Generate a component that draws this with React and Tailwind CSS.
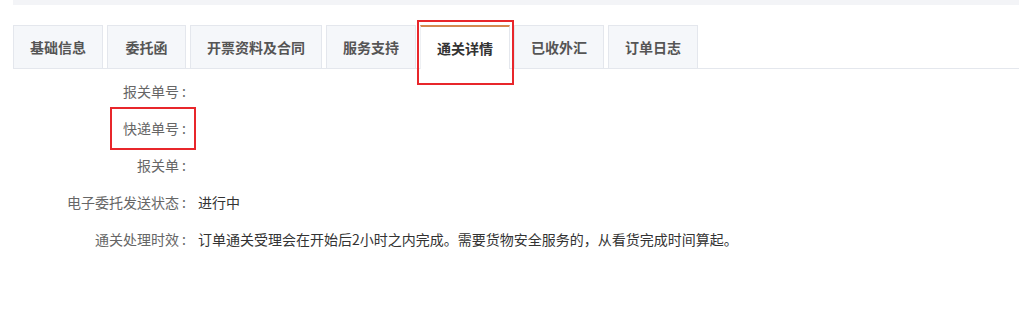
const tabs = ["基础信息", "委托函", "开票资料及合同", "服务支持", "通关详情", "已收外汇", "订单日志"];
const activeTab = "通关详情";

const rows = [
  { label: "报关单号", value: "" },
  { label: "快递单号", value: "", marked: true },
  { label: "报关单", value: "" },
  { label: "电子委托发送状态", value: "进行中" },
  {
    label: "通关处理时效",
    value: "订单通关受理会在开始后2小时之内完成。需要货物安全服务的，从看货完成时间算起。",
  },
];

export default function App() {
  return (
    <div
      className="bg-white w-[1019px] h-[332px] overflow-hidden pl-[13px]"
      style={{ fontFamily: '"Microsoft YaHei", "Noto Sans CJK SC", "Noto Sans", sans-serif' }}
    >
      {/* top grey strip */}
      <div className="h-[5px] bg-[#f3f4f7]" />

      {/* Tabs */}
      <div className="mt-[20px] flex items-end gap-[4px] border-b border-[#e4e7ed] h-[44px]">
        {tabs.map((tab) => {
          const active = tab === activeTab;
          return (
            <div key={tab} className="relative h-full">
              <div
                className={
                  active
                    ? "h-[44px] -mb-px min-w-[79px] px-4 flex items-center justify-center bg-white border-x border-x-[#eef0f3] border-r-[#e4e7ed] border-t-2 border-t-[#d4894f] text-[14px] font-bold text-[#333]"
                    : "h-full min-w-[79px] px-4 flex items-center justify-center bg-[#f5f7fa] border border-b-0 border-[#e4e7ed] text-[14px] font-bold text-[#555]"
                }
              >
                {tab}
              </div>
              {active && (
                <div className="absolute left-[-3px] right-[-4px] top-[-5px] h-[65px] border-2 border-[#e8262b] pointer-events-none" />
              )}
            </div>
          );
        })}
      </div>

      {/* Detail rows */}
      <div className="mt-[4px] text-[14px]">
        {rows.map((row) => (
          <div key={row.label} className="flex items-center h-[37px]">
            <div className="w-[173px] flex justify-end">
              <div className="relative text-[#666]">
                {row.label}
                <span className="ml-[3px]">:</span>
                {row.marked && (
                  <div className="absolute left-[-13px] right-[-10px] top-[-11px] bottom-[-11px] border-2 border-[#e8262b]" />
                )}
              </div>
            </div>
            <div className="ml-[12px] text-[#333]">{row.value}</div>
          </div>
        ))}
      </div>
    </div>
  );
}
